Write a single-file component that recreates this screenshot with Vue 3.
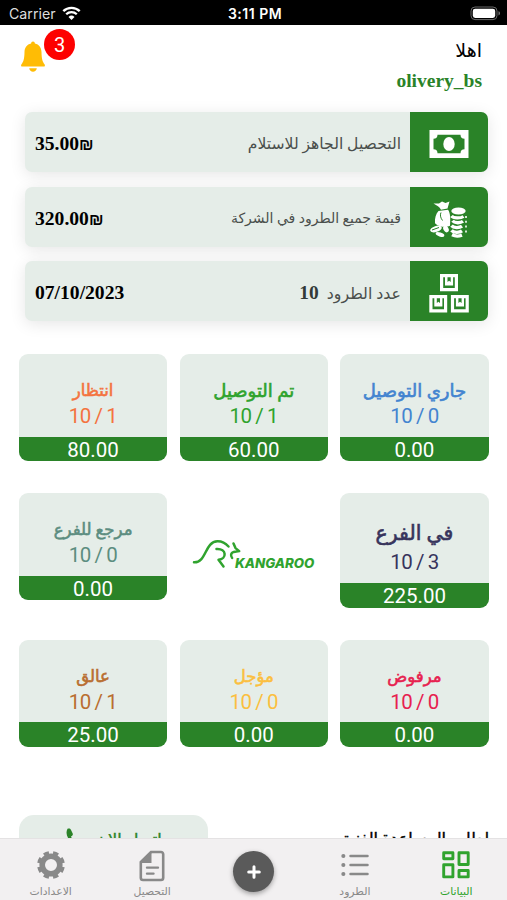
<script setup>
import { ref } from 'vue';

const summary = [
  { icon: 'cash', label: 'التحصيل الجاهز للاستلام', value: '35.00', currency: '₪' },
  { icon: 'coins', label: 'قيمة جميع الطرود في الشركة', value: '320.00', currency: '₪' },
  { icon: 'boxes', label: 'عدد الطرود', count: 10, value: '07/10/2023' },
];

const total = 10;

const rows = [
  [
    { name: 'جاري التوصيل', count: 0, amount: '0.00', type: 'on-way' },
    { name: 'تم التوصيل', count: 1, amount: '60.00', type: 'delivered' },
    { name: 'انتظار', count: 1, amount: '80.00', type: 'waiting' },
  ],
  [
    { name: 'في الفرع', count: 3, amount: '225.00', type: 'in-branch' },
    { logo: true },
    { name: 'مرجع للفرع', count: 0, amount: '0.00', type: 'returned' },
  ],
  [
    { name: 'مرفوض', count: 0, amount: '0.00', type: 'rejected' },
    { name: 'مؤجل', count: 0, amount: '0.00', type: 'delayed' },
    { name: 'عالق', count: 1, amount: '25.00', type: 'stuck' },
  ],
];

const activeTab = ref('home');
</script>

<template>
  <div class="screen">
    <div class="status-bar">
      <div class="carrier">
        <span>Carrier</span>
        <svg width="19" height="15" viewBox="0 0 19 15" fill="none">
          <path d="M1.3 5.2a11.8 11.8 0 0 1 16.4 0" stroke="#fff" stroke-width="2.4" />
          <path d="M4.2 8.3a7.6 7.6 0 0 1 10.6 0" stroke="#fff" stroke-width="2.3" />
          <path d="M9.5 14l-3-3.1a4.3 4.3 0 0 1 6 0z" fill="#fff" />
        </svg>
      </div>
      <span class="time">3:11 PM</span>
      <svg class="battery" width="31" height="15" viewBox="0 0 31 15">
        <rect x="1" y="1" width="26" height="12.6" rx="4" fill="none" stroke="#686868" />
        <rect x="2.8" y="2.7" width="22.4" height="9.2" rx="2.4" fill="#fff" />
        <path d="M28.5 5.2c2 .6 2 3.6 0 4.2z" fill="#777" />
      </svg>
    </div>

    <header class="header">
      <div class="greeting">
        <span class="hello">اهلا</span>
        <span class="user">olivery_bs</span>
      </div>
      <div class="bell">
        <svg width="26" height="32" viewBox="0 0 26 32" fill="#ffbc05">
          <path
            d="M13 .5c-1.2 0-1.8.8-1.9 1.9C6.9 3.3 4.6 6.6 4.5 11c-.1 6.5-.9 9.6-3 12.2C.7 24.2 1 25.6 2.2 25.6h21.6c1.2 0 1.5-1.4.7-2.4-2.1-2.6-2.9-5.7-3-12.2-.1-4.4-2.4-7.7-6.6-8.6C14.8 1.3 14.2.5 13 .5z"
          />
          <path d="M9.2 27.3h7.6c-.3 2.2-1.9 3.5-3.8 3.5s-3.5-1.3-3.8-3.5z" />
        </svg>
        <span class="badge">3</span>
      </div>
    </header>

    <section class="summary">
      <div v-for="item in summary" :key="item.icon" class="summary-row">
        <div class="summary-icon">
          <svg v-if="item.icon === 'cash'" width="40" height="28" viewBox="0 0 40 28">
            <path d="M.5 0h39v28H.5z" fill="#fff" />
            <path
              d="M8.5 4.7h23a4 4 0 0 0 4 4v10.6a4 4 0 0 0-4 4h-23a4 4 0 0 0-4-4V8.7a4 4 0 0 0 4-4z"
              fill="#2a8328"
            />
            <ellipse cx="20" cy="14" rx="5.7" ry="7" fill="#fff" />
          </svg>
          <svg v-else-if="item.icon === 'coins'" width="40" height="38" viewBox="0 0 40 38">
            <g fill="#fff">
              <path d="M4.5 3.500l5.500 0 3-2 3.500 1.500L20.500 1.500l-2 7-6.500 1.200c-1.500-3-4-4-7.500-6.200z" />
              <path d="M9.500 11l9.500-1.300c2.500 3 2.500 10 2 16-4 2-11 1.500-15-2.500-.5-5 1-9.500 3.500-12.200z" />
              <ellipse cx="29.500" cy="11" rx="7.2" ry="3.500" />
              <ellipse cx="7" cy="29" rx="6" ry="3" transform="rotate(-18 7 29)" />
              <ellipse cx="17" cy="29" rx="3.500" ry="2.500" transform="rotate(60 17 29)" />
              <ellipse cx="11" cy="34.500" rx="4.500" ry="2" transform="rotate(18 11 34.500)" />
            </g>
            <g fill="none" stroke="#fff" stroke-width="3.3">
              <path d="M22.500 16c2 2.500 9 2.500 12 .5M23.500 20.800c2 2.500 8 2.500 10.500.5M22.500 25.600c2 2.500 8 2.500 10.500.5M22.500 30.400c2 2.500 8 2.500 10.500.5M23 34.800c3 1.500 7 1.500 10 .3" />
              <path d="M37 16v18" stroke-width="1.6" stroke-dasharray="2 2.8" />
            </g>
            <path d="M12 12.500c-1 2-.8 5 1.500 8M3 30l7-2.500" fill="none" stroke="#2a8328" />
          </svg>
          <svg v-else width="40" height="40" viewBox="0 0 40 40">
            <g fill="none" stroke="#fff" stroke-width="3.2">
              <path d="M12.6 2.6h14.8v14H12.6zM1.9 23.6h14.7v14.2H1.9zM23.5 23.6h14.7v14.2H23.5z" />
            </g>
            <path
              d="M16 4h2.5v5l1.6-1.3L21.7 9V4h2.4v8.5H16zM5.3 25h2.5v5l1.6-1.3L11 30v-5h2.400v8.500H5.300zM26.900 25h2.500v5l1.600-1.300 1.600 1.300v-5H35v8.500h-8.100z"
              fill="#fff"
            />
          </svg>
        </div>
        <div class="summary-label" :class="item.icon">
          {{ item.label }}
          <b v-if="item.count" class="count">{{ item.count }}</b>
        </div>
        <div class="summary-value">
          {{ item.value }}<span v-if="item.currency" class="shekel">{{ item.currency }}</span>
        </div>
      </div>
    </section>

    <section class="stats">
      <div v-for="(row, i) in rows" :key="i" class="stats-row">
        <template v-for="(card, j) in row" :key="j">
          <div v-if="card.logo" class="logo">
            <svg width="124" height="32" viewBox="0 0 124 32">
              <g fill="none" stroke="#30a32e" stroke-width="2.5" stroke-linecap="round" stroke-linejoin="round">
                <path d="M2 23.3C14.500 24 12.500 2.800 25.500 2.300c5-.1 8.500 2.400 11 5.200" />
                <path d="M24.500 10c10.500-.7 10.500 10 2 10.800l5 6.700" />
                <path d="M41.500 4.500l2 4.600 3.700 3-5.500.8c-3 1-3.300 3.600-1.600 6" />
              </g>
              <text x="43" y="28.500">KANGAROO</text>
            </svg>
          </div>
          <div v-else class="card" :class="card.type">
            <div class="card-body">
              <span class="name">{{ card.name }}</span>
              <span class="ratio">{{ total }} / {{ card.count }}</span>
            </div>
            <div class="amount">{{ card.amount }}</div>
          </div>
        </template>
      </div>
    </section>

    <section class="support">
      <span class="support-title">لطلب المساعدة الفنية</span>
      <button class="call">
        <span>اتصل الان</span>
        <svg width="20" height="20" viewBox="0 0 20 20" fill="#2a8328">
          <path
            d="M2.5.8C4 .2 5.2.3 5.9 1.8l1.8 3.7c.5 1.2-.1 2-1.7 3 1 2.8 3 4.8 5.7 5.7 1-1.6 1.9-2.1 3-1.6l3.5 1.7c1.5.8 1.5 2 .6 3.5C13 22-2.5 10 2.5.8z"
          />
        </svg>
      </button>
    </section>

    <nav class="tabs">
      <div class="tab" :class="{ active: activeTab === 'home' }" @click="activeTab = 'home'">
        <svg width="30" height="30" viewBox="0 0 30 30" fill="none" stroke="currentColor" stroke-width="2.9" stroke-linejoin="round">
          <path d="M2.7 2.7h9.200v6.100H2.700zM18 2.700h9.200v11.800H18zM2.700 14.800h9.200v12.100H2.700zM18 20.500h9.200v6.400H18z" />
        </svg>
        <span>البيانات</span>
      </div>
      <div class="tab" :class="{ active: activeTab === 'parcels' }" @click="activeTab = 'parcels'">
        <svg width="30" height="30" viewBox="0 0 30 30" fill="none" stroke="currentColor" stroke-width="2.5" stroke-linecap="round">
          <path d="M10.5 6h17M10.5 15h17M10.5 24h17" />
          <path d="M3.3 6h.1M3.3 15h.1M3.3 24h.1" stroke-width="4" />
        </svg>
        <span>الطرود</span>
      </div>
      <div class="tab">
        <button class="add">
          <svg width="14" height="14" viewBox="0 0 14 14" stroke="#fff" stroke-width="3" stroke-linecap="round">
            <path d="M7 1.7v10.6M1.7 7h10.6" />
          </svg>
        </button>
      </div>
      <div class="tab" :class="{ active: activeTab === 'collect' }" @click="activeTab = 'collect'">
        <svg width="26" height="32" viewBox="0 0 26 32">
          <path
            d="M12 2h10a2.2 2.2 0 0 1 2.2 2.2v23.6A2.2 2.2 0 0 1 22 30H4a2.2 2.2 0 0 1-2.2-2.2V12z"
            fill="none"
            stroke="currentColor"
            stroke-width="2.6"
          />
          <path d="M12.5 1.5V13H1.5v-1z" fill="currentColor" />
          <path d="M8 17.6h11M8 23.6h6.5" fill="none" stroke="currentColor" stroke-width="2.4" stroke-linecap="round" />
        </svg>
        <span>التحصيل</span>
      </div>
      <div class="tab" :class="{ active: activeTab === 'settings' }" @click="activeTab = 'settings'">
        <svg width="30" height="30" viewBox="0 0 30 30">
          <circle cx="15" cy="15" r="8.8" fill="none" stroke="currentColor" stroke-width="5.6" />
          <circle
            cx="15"
            cy="15"
            r="12.2"
            fill="none"
            stroke="currentColor"
            stroke-width="3.4"
            pathLength="80"
            stroke-dasharray="5.6 4.4"
            stroke-dashoffset="-2.2"
          />
        </svg>
        <span>الاعدادات</span>
      </div>
    </nav>
  </div>
</template>

<style>
body {
  overflow: hidden;
}
</style>

<style scoped>
.screen {
  height: 900px;
  overflow: hidden;
  display: flex;
  flex-direction: column;
  direction: rtl;
  background-color: #fff;
  font-family: Roboto, 'DejaVu Sans', sans-serif;
}
.screen svg {
  display: block;
  flex: none;
}
.status-bar {
  direction: ltr;
  flex: none;
  height: 25px;
  box-sizing: border-box;
  padding: 2px 6px 0 9px;
  display: grid;
  grid-template-columns: 1fr auto 1fr;
  align-items: center;
  background-color: #000;
  color: #fff;
  font-size: 14.2px;
  font-family: Inter, sans-serif;
}
.carrier {
  display: flex;
  align-items: center;
  gap: 6px;
  color: #ddd;
}
.time {
  font-weight: 600;
  font-size: 14px;
  letter-spacing: 0.5px;
}
.battery {
  justify-self: end;
}
.header {
  flex: none;
  height: 87px;
  box-sizing: border-box;
  padding: 4px 25px 0 20px;
  display: flex;
  justify-content: space-between;
}
.greeting {
  display: flex;
  flex-direction: column;
  padding-top: 8px;
}
.hello {
  font-size: 19px;
  line-height: 28px;
}
.user {
  font-family: 'Liberation Serif', serif;
  font-weight: 700;
  font-size: 19.5px;
  line-height: 31px;
  color: #2a8328;
}
.bell {
  position: relative;
  width: 56px;
  direction: ltr;
  & svg {
    margin-top: 12px;
  }
}
.badge {
  position: absolute;
  top: 0;
  left: 24px;
  width: 31px;
  height: 31px;
  border-radius: 50%;
  background-color: #fd0100;
  color: #fff;
  font-size: 20px;
  line-height: 32px;
  text-align: center;
}
.summary {
  flex: none;
  padding: 0 19px 0 25px;
  display: flex;
  flex-direction: column;
  gap: 14.5px;
}
.summary-row {
  height: 60px;
  display: flex;
  align-items: center;
  border-radius: 7px;
  background-color: #e5ede8;
  box-shadow: 0 3px 16px rgba(0, 0, 0, 0.1);
}
.summary-icon {
  width: 78px;
  height: 60px;
  display: flex;
  align-items: center;
  justify-content: center;
  padding-top: 4px;
  box-sizing: border-box;
  border-radius: 0 7px 7px 0;
  background-color: #2a8328;
}
.summary-label {
  margin-right: 9px;
  padding-top: 3px;
  color: #4a4f4c;
  white-space: nowrap;
  &.cash {
    font-size: 15.6px;
  }
  &.coins {
    font-size: 14px;
  }
  &.boxes {
    font-size: 15.8px;
  }
}
.count {
  margin-right: 4px;
  font-family: 'Liberation Serif', serif;
  font-size: 19.5px;
  color: #333a38;
}
.summary-value {
  direction: ltr;
  margin: 4px auto 0 10px;
  font-family: 'Liberation Serif', serif;
  font-weight: 700;
  font-size: 19.6px;
}
.shekel {
  font-family: 'Liberation Sans', sans-serif;
  font-size: 16.5px;
}
.stats {
  flex: none;
  padding: 33px 18.5px 0 19px;
}
.stats-row {
  display: grid;
  grid-template-columns: repeat(3, 1fr);
  column-gap: 12.5px;
  align-items: start;
  margin-bottom: 32px;
}
.card {
  border-radius: 9px;
  overflow: hidden;
  background-color: #e5ede8;
}
.card-body {
  height: 82.5px;
  box-sizing: border-box;
  padding-top: 23px;
  display: flex;
  flex-direction: column;
  align-items: center;
}
.name {
  font-size: 16.5px;
  line-height: 27px;
  white-space: nowrap;
  -webkit-text-stroke: 0.6px currentColor;
}
.ratio {
  direction: ltr;
  font-size: 20.5px;
  line-height: 25px;
  letter-spacing: -0.5px;
  word-spacing: -0.8px;
}
.amount {
  height: 24.5px;
  line-height: 26px;
  text-align: center;
  font-size: 20.5px;
  color: #fff;
  background-color: #2a8328;
}
.on-way {
  color: #4384d0;
}
.delivered {
  color: #2fa32d;
}
.on-way .name,
.delivered .name {
  font-size: 18px;
}
.waiting {
  color: #f4733f;
}
.in-branch {
  color: #37345c;
  & .card-body {
    height: 90px;
    padding-top: 24px;
  }
  & .name {
    font-size: 20.5px;
    line-height: 33px;
  }
}
.returned {
  color: #5c8d80;
}
.rejected {
  color: #e7214f;
}
.delayed {
  color: #fbbf3f;
}
.stuck {
  color: #b96e30;
}
.logo {
  display: flex;
  justify-content: center;
  padding-top: 46px;
  direction: ltr;
  & text {
    font-family: Inter, sans-serif;
    font-weight: 800;
    font-style: italic;
    font-size: 13.3px;
    fill: #30a32e;
  }
}
.support {
  flex: none;
  margin-top: 36px;
  padding: 0 18px 0 19px;
  display: flex;
  justify-content: space-between;
}
.support-title {
  padding-top: 14px;
  font-size: 16px;
  -webkit-text-stroke: 0.4px currentColor;
}
.call {
  width: 189px;
  height: 50px;
  padding: 0;
  border: 0;
  border-radius: 15px;
  background-color: #e5ede8;
  display: flex;
  justify-content: center;
  align-items: center;
  gap: 11px;
  font-family: 'DejaVu Sans', sans-serif;
  font-size: 16px;
  color: #2a8328;
  -webkit-text-stroke: 0.4px currentColor;
  & svg {
    margin-bottom: 3px;
  }
}
.tabs {
  position: absolute;
  top: 838px;
  left: 0;
  right: 0;
  height: 62px;
  box-sizing: border-box;
  border-top: 1px solid #e4e2e3;
  display: grid;
  grid-template-columns: repeat(5, 1fr);
  background-color: #f2f0f1;
}
.tab {
  display: flex;
  flex-direction: column;
  align-items: center;
  justify-content: space-between;
  padding: 11px 0 1px;
  color: #898989;
  font-size: 10.8px;
  line-height: 15px;
  &.active {
    color: #30a32e;
  }
}
.add {
  width: 41px;
  height: 41px;
  margin-top: 1px;
  padding: 0;
  border: 0;
  border-radius: 50%;
  display: flex;
  align-items: center;
  justify-content: center;
  background-color: #5a5a5a;
  box-shadow: 0 2px 5px rgba(0, 0, 0, 0.35);
}
</style>
